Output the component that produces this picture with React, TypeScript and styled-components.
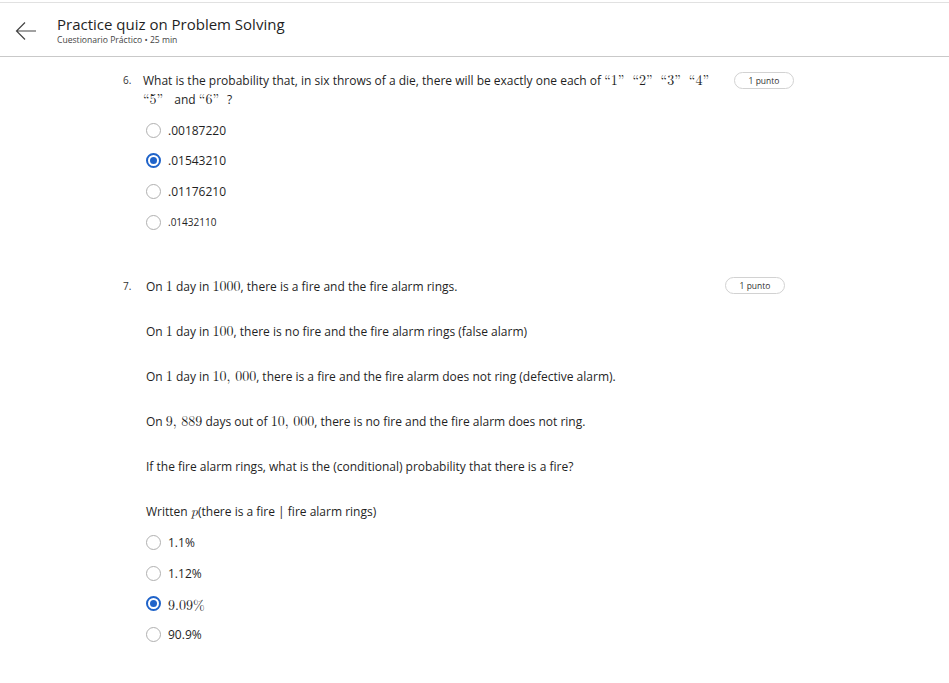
import React from "react";
import styled, { createGlobalStyle } from "styled-components";

const Global = createGlobalStyle`
  html, body { margin: 0; padding: 0; background: #fff; }
  body { font-family: "Open Sans", "Noto Sans", sans-serif; color: #1f1f1f; }
`;

const Page = styled.div`
  width: 949px;
  min-height: 683px;
  background: #fff;
  border-top: 1px solid #e1e1e1;
  margin-top: 2px;
`;

const Header = styled.header`
  display: flex;
  align-items: center;
  height: 54px;
  border-bottom: 1px solid #c9c9c9;
  box-sizing: border-box;
  padding-left: 15px;
`;

const BackButton = styled.div`
  width: 22px;
  height: 22px;
  display: flex;
  align-items: center;
  justify-content: center;
  margin-right: 20px;
  margin-top: 2px;
`;

const TitleBlock = styled.div`
  display: flex;
  flex-direction: column;
  margin-top: 1px;
`;

const Title = styled.h1`
  margin: 0;
  font-size: 15px;
  font-weight: 400;
  color: #1f1f1f;
  line-height: 20px;
`;

const Subtitle = styled.div`
  font-size: 8.6px;
  color: #444;
  line-height: 12px;
`;

const Question = styled.section<{ $top: number; $textLeft: number }>`
  display: grid;
  grid-template-columns: ${(p) => p.$textLeft}px 1fr auto;
  padding-left: 123px;
  margin-top: ${(p) => p.$top}px;
`;

const Num = styled.div`
  font-size: 10px;
  line-height: 19px;
  color: #333;
`;

const Body = styled.div`
  display: flex;
  flex-direction: column;
`;

const Prompt = styled.div`
  font-size: 12px;
  line-height: 19px;
  color: #1f1f1f;
  max-width: 580px;
`;

const Para = styled.p`
  margin: 0 0 26px 0;
  font-size: 12px;
  line-height: 19px;
  color: #1f1f1f;
`;

const M = styled.span`
  font-family: "Latin Modern Roman", "DejaVu Serif", "Liberation Serif", serif;
  font-size: 14px;
  line-height: 1;
`;

const Quote = styled.span`
  font-family: "Latin Modern Roman", "Liberation Serif", serif;
  font-size: 14px;
  line-height: 1;
  margin-right: 8px;
`;

const Points = styled.div<{ $mr: number; $mt: number }>`
  align-self: start;
  margin-top: ${(p) => p.$mt}px;
  margin-right: ${(p) => p.$mr}px;
  width: 60px;
  height: 17px;
  box-sizing: border-box;
  border: 1px solid #d2d2d2;
  border-radius: 9px;
  font-size: 8.5px;
  color: #333;
  display: flex;
  align-items: center;
  justify-content: center;
`;

const Options = styled.div<{ $mt: number; $ml: number }>`
  display: flex;
  flex-direction: column;
  margin-top: ${(p) => p.$mt}px;
  margin-left: ${(p) => p.$ml}px;
`;

const Option = styled.label`
  display: flex;
  align-items: center;
  height: 30.6px;
`;

const Radio = styled.span<{ $checked?: boolean }>`
  width: 15px;
  height: 15px;
  box-sizing: border-box;
  border-radius: 50%;
  border: ${(p) => (p.$checked ? "2px solid #1f63c9" : "1.5px solid #b0b0b0")};
  display: flex;
  align-items: center;
  justify-content: center;
  margin-right: 7px;
  flex-shrink: 0;
  &::after {
    content: "";
    display: ${(p) => (p.$checked ? "block" : "none")};
    width: 7px;
    height: 7px;
    border-radius: 50%;
    background: #1f63c9;
  }
`;

const OptText = styled.span<{ $small?: boolean; $math?: boolean }>`
  font-size: ${(p) => (p.$small ? "10px" : p.$math ? "14px" : "12px")};
  color: #1f1f1f;
  font-family: ${(p) =>
    p.$math ? '"Latin Modern Roman", "DejaVu Serif", "Liberation Serif", serif' : "inherit"};
`;

const Arrow = () => (
  <svg width="22" height="20" viewBox="0 0 22 20">
    <path d="M1.5 10 H21 M10 1.5 L1.5 10 L10 18.5" fill="none" stroke="#444" strokeWidth="1.2" />
  </svg>
);

export default function App() {
  return (
    <Page>
      <Global />
      <Header>
        <BackButton>
          <Arrow />
        </BackButton>
        <TitleBlock>
          <Title>Practice quiz on Problem Solving</Title>
          <Subtitle>Cuestionario Práctico • 25 min</Subtitle>
        </TitleBlock>
      </Header>

      <Question $top={14} $textLeft={20}>
        <Num>6.</Num>
        <Body>
          <Prompt>
            What is the probability that, in six throws of a die, there will be exactly one each of{" "}
            <Quote>“1”</Quote>
            <Quote>“2”</Quote>
            <Quote>“3”</Quote>
            <Quote>“4”</Quote>
            <br />
            <Quote>“5”</Quote> and <Quote>“6”</Quote>?
          </Prompt>
          <Options $mt={6} $ml={3}>
            <Option>
              <Radio />
              <OptText>.00187220</OptText>
            </Option>
            <Option>
              <Radio $checked />
              <OptText>.01543210</OptText>
            </Option>
            <Option>
              <Radio />
              <OptText>.01176210</OptText>
            </Option>
            <Option>
              <Radio />
              <OptText $small>.01432110</OptText>
            </Option>
          </Options>
        </Body>
        <Points $mr={155} $mt={1}>1 punto</Points>
      </Question>

      <Question $top={40} $textLeft={23}>
        <Num>7.</Num>
        <Body>
          <Para>
            On <M>1</M> day in <M>1000</M>, there is a fire and the fire alarm rings.
          </Para>
          <Para>
            On <M>1</M> day in <M>100</M>, there is no fire and the fire alarm rings (false alarm)
          </Para>
          <Para>
            On <M>1</M> day in <M>10, 000</M>, there is a fire and the fire alarm does not ring (defective alarm).
          </Para>
          <Para>
            On <M>9, 889</M> days out of <M>10, 000</M>, there is no fire and the fire alarm does not ring.
          </Para>
          <Para>If the fire alarm rings, what is the (conditional) probability that there is a fire?</Para>
          <Para style={{ marginBottom: 0 }}>
            Written <M style={{ fontStyle: "italic" }}>p</M>(there is a fire | fire alarm rings)
          </Para>
          <Options $mt={6} $ml={0}>
            <Option>
              <Radio />
              <OptText>1.1%</OptText>
            </Option>
            <Option>
              <Radio />
              <OptText>1.12%</OptText>
            </Option>
            <Option>
              <Radio $checked />
              <OptText $math>9.09%</OptText>
            </Option>
            <Option>
              <Radio />
              <OptText>90.9%</OptText>
            </Option>
          </Options>
        </Body>
        <Points $mr={164} $mt={0}>1 punto</Points>
      </Question>
    </Page>
  );
}
